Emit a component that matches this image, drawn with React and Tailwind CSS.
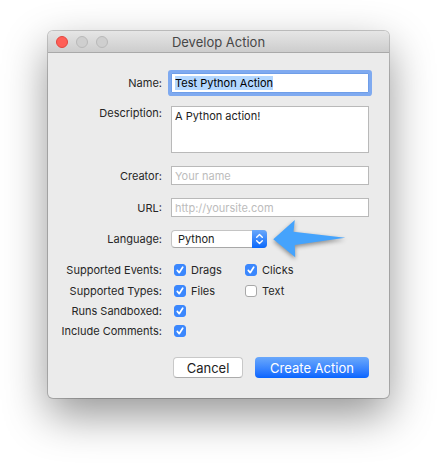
import { useEffect, useRef } from "react";

const fieldClass =
  "block h-[19px] w-full border border-[#b9b9b9] bg-white px-[3px] text-[11px] leading-[14px] text-[#222] outline-none placeholder:text-[#bcbcbc] placeholder:opacity-100";

function Row({ label, id, className = "", labelClass = "self-center", children }) {
  return (
    <div className={`flex gap-[9px] ${className}`}>
      <label
        htmlFor={id}
        className={`w-[114px] shrink-0 text-right text-[11px] leading-[14px] whitespace-nowrap ${labelClass}`}
      >
        {label}
      </label>
      <div className="min-w-0 flex-1">{children}</div>
    </div>
  );
}

function Check({ id, checked = false }) {
  return (
    <span className="relative block h-3 w-3 shrink-0">
      <input
        id={id}
        type="checkbox"
        defaultChecked={checked}
        className="peer block h-3 w-3 appearance-none rounded-[3px] border border-[#a8a8a8] bg-white checked:border-[#3b87fd] checked:bg-[#3b87fd]"
      />
      <svg
        viewBox="0 0 12 12"
        className="pointer-events-none absolute inset-0 hidden h-3 w-3 peer-checked:block"
        fill="none"
        stroke="white"
        strokeWidth="1.7"
        strokeLinecap="round"
        strokeLinejoin="round"
        aria-hidden="true"
      >
        <path d="M3.3 6.4 5.2 8.7 8.7 3.2" />
      </svg>
    </span>
  );
}

function Option({ id, checked, children }) {
  return (
    <div className="flex w-[71px] items-center gap-[5px]">
      <Check id={id} checked={checked} />
      <label htmlFor={id} className="text-[11px] leading-[14px]">
        {children}
      </label>
    </div>
  );
}

export default function App() {
  const nameRef = useRef(null);

  useEffect(() => {
    nameRef.current.focus();
    nameRef.current.select();
  }, []);

  return (
    <main className="bg-white px-12 pt-[31px] pb-[67px] font-['Inter',sans-serif] text-[#262626]">
      <section className="rounded-[5px] bg-[#ebebeb] shadow-[0_0_0_1px_rgba(0,0,0,0.2),0_17px_44px_rgba(0,0,0,0.42)]">
        <header className="grid h-[22px] grid-cols-[60px_1fr_60px] items-center rounded-t-[5px] border-b border-[#a9a9a9] bg-linear-to-b from-[#e6e6e6] to-[#cdcdcd]">
          <div className="flex gap-2 pl-2">
            <button type="button" aria-label="Close" className="h-3 w-3 rounded-full border border-[#e2463f] bg-[#ff5f57]" />
            <button type="button" aria-label="Minimize" className="h-3 w-3 rounded-full border border-[#b9b9b9] bg-[#cfcfcf]" />
            <button type="button" aria-label="Zoom" className="h-3 w-3 rounded-full border border-[#b9b9b9] bg-[#cfcfcf]" />
          </div>
          <h1 className="text-center text-[13px] leading-4 text-[#474747]">Develop Action</h1>
        </header>

        <form className="px-5 pt-5 pb-5 pl-0" onSubmit={(e) => e.preventDefault()}>
          <div className="flex flex-col gap-[13px]">
            <Row label="Name:" id="name">
              <input
                ref={nameRef}
                id="name"
                defaultValue="Test Python Action"
                className="block h-5 w-full rounded-[1px] border border-[#6f9ee8] bg-white px-[3px] text-[11px] leading-[14px] text-black ring-3 ring-[#7faaf0] outline-none selection:bg-[#b3d7ff] selection:text-black"
              />
            </Row>
            <Row label="Description:" id="description" labelClass="self-start">
              <textarea
                id="description"
                defaultValue="A Python action!"
                className="block h-[47px] w-full resize-none border border-[#b9b9b9] bg-white px-[3px] py-[2px] text-[11px] leading-[14px] text-[#222] outline-none"
              />
            </Row>
            <Row label="Creator:" id="creator">
              <input id="creator" placeholder="Your name" className={fieldClass} />
            </Row>
            <Row label="URL:" id="url">
              <input id="url" placeholder="http://yoursite.com" className={fieldClass} />
            </Row>
            <Row label="Language:" id="language">
              <div className="relative w-[96px]">
                <select
                  id="language"
                  className="block h-[18px] w-full appearance-none rounded-[4px] border border-[#c4c4c4] border-b-[#a8a8a8] bg-white pr-4 pl-[6px] text-[11px] leading-[16px] text-[#222] outline-none"
                >
                  <option>Python</option>
                </select>
                <svg
                  viewBox="0 0 15 18"
                  className="pointer-events-none absolute top-0 right-0 h-[18px] w-[15px]"
                  fill="none"
                  aria-hidden="true"
                >
                  <defs>
                    <linearGradient id="cap" x1="0" y1="0" x2="0" y2="1">
                      <stop offset="0" stopColor="#6aa8fb" />
                      <stop offset="1" stopColor="#0a68fb" />
                    </linearGradient>
                  </defs>
                  <path d="M0 0H11Q15 0 15 4V14Q15 18 11 18H0Z" fill="url(#cap)" />
                  <path
                    d="M4.7 7.3 7.5 4.6 10.3 7.3M4.7 10.7 7.5 13.4 10.3 10.7"
                    stroke="white"
                    strokeWidth="1.4"
                    strokeLinecap="round"
                    strokeLinejoin="round"
                  />
                </svg>
                <svg
                  viewBox="0 0 80 46"
                  className="pointer-events-none absolute -top-3 left-[100px] h-[46px] w-[80px] drop-shadow-[0_2px_2px_rgba(0,0,0,0.4)]"
                  aria-hidden="true"
                >
                  <path d="M2.3 21.3 23.8 2 22.5 13.7 74.3 19.7 23.8 27 24.2 39.3Z" fill="#45a3fc" />
                </svg>
              </div>
            </Row>
          </div>

          <div className="mt-3">
            <Row label="Supported Events:" className="mb-px h-5 items-center">
              <div className="flex pl-[3px]">
                <Option id="drags" checked>Drags</Option>
                <Option id="clicks" checked>Clicks</Option>
              </div>
            </Row>
            <Row label="Supported Types:" className="h-5 items-center">
              <div className="flex pl-[3px]">
                <Option id="files" checked>Files</Option>
                <Option id="text">Text</Option>
              </div>
            </Row>
            <Row label="Runs Sandboxed:" id="sandboxed" className="h-5 items-center">
              <div className="pl-[3px]">
                <Check id="sandboxed" checked />
              </div>
            </Row>
            <Row label="Include Comments:" id="comments" className="h-5 items-center">
              <div className="pl-[3px]">
                <Check id="comments" checked />
              </div>
            </Row>
          </div>

          <div className="mt-4 flex justify-end gap-3">
            <button
              type="button"
              className="h-[21px] w-[70px] rounded-[4px] border border-[#c8c8c8] border-b-[#ababab] bg-white text-[13px] leading-4 text-[#222]"
            >
              Cancel
            </button>
            <button
              type="submit"
              className="h-[21px] w-[114px] rounded-[4px] bg-linear-to-b from-[#6aa8fb] to-[#0564ff] text-[13px] leading-4 whitespace-nowrap text-white"
            >
              Create Action
            </button>
          </div>
        </form>
      </section>
    </main>
  );
}
